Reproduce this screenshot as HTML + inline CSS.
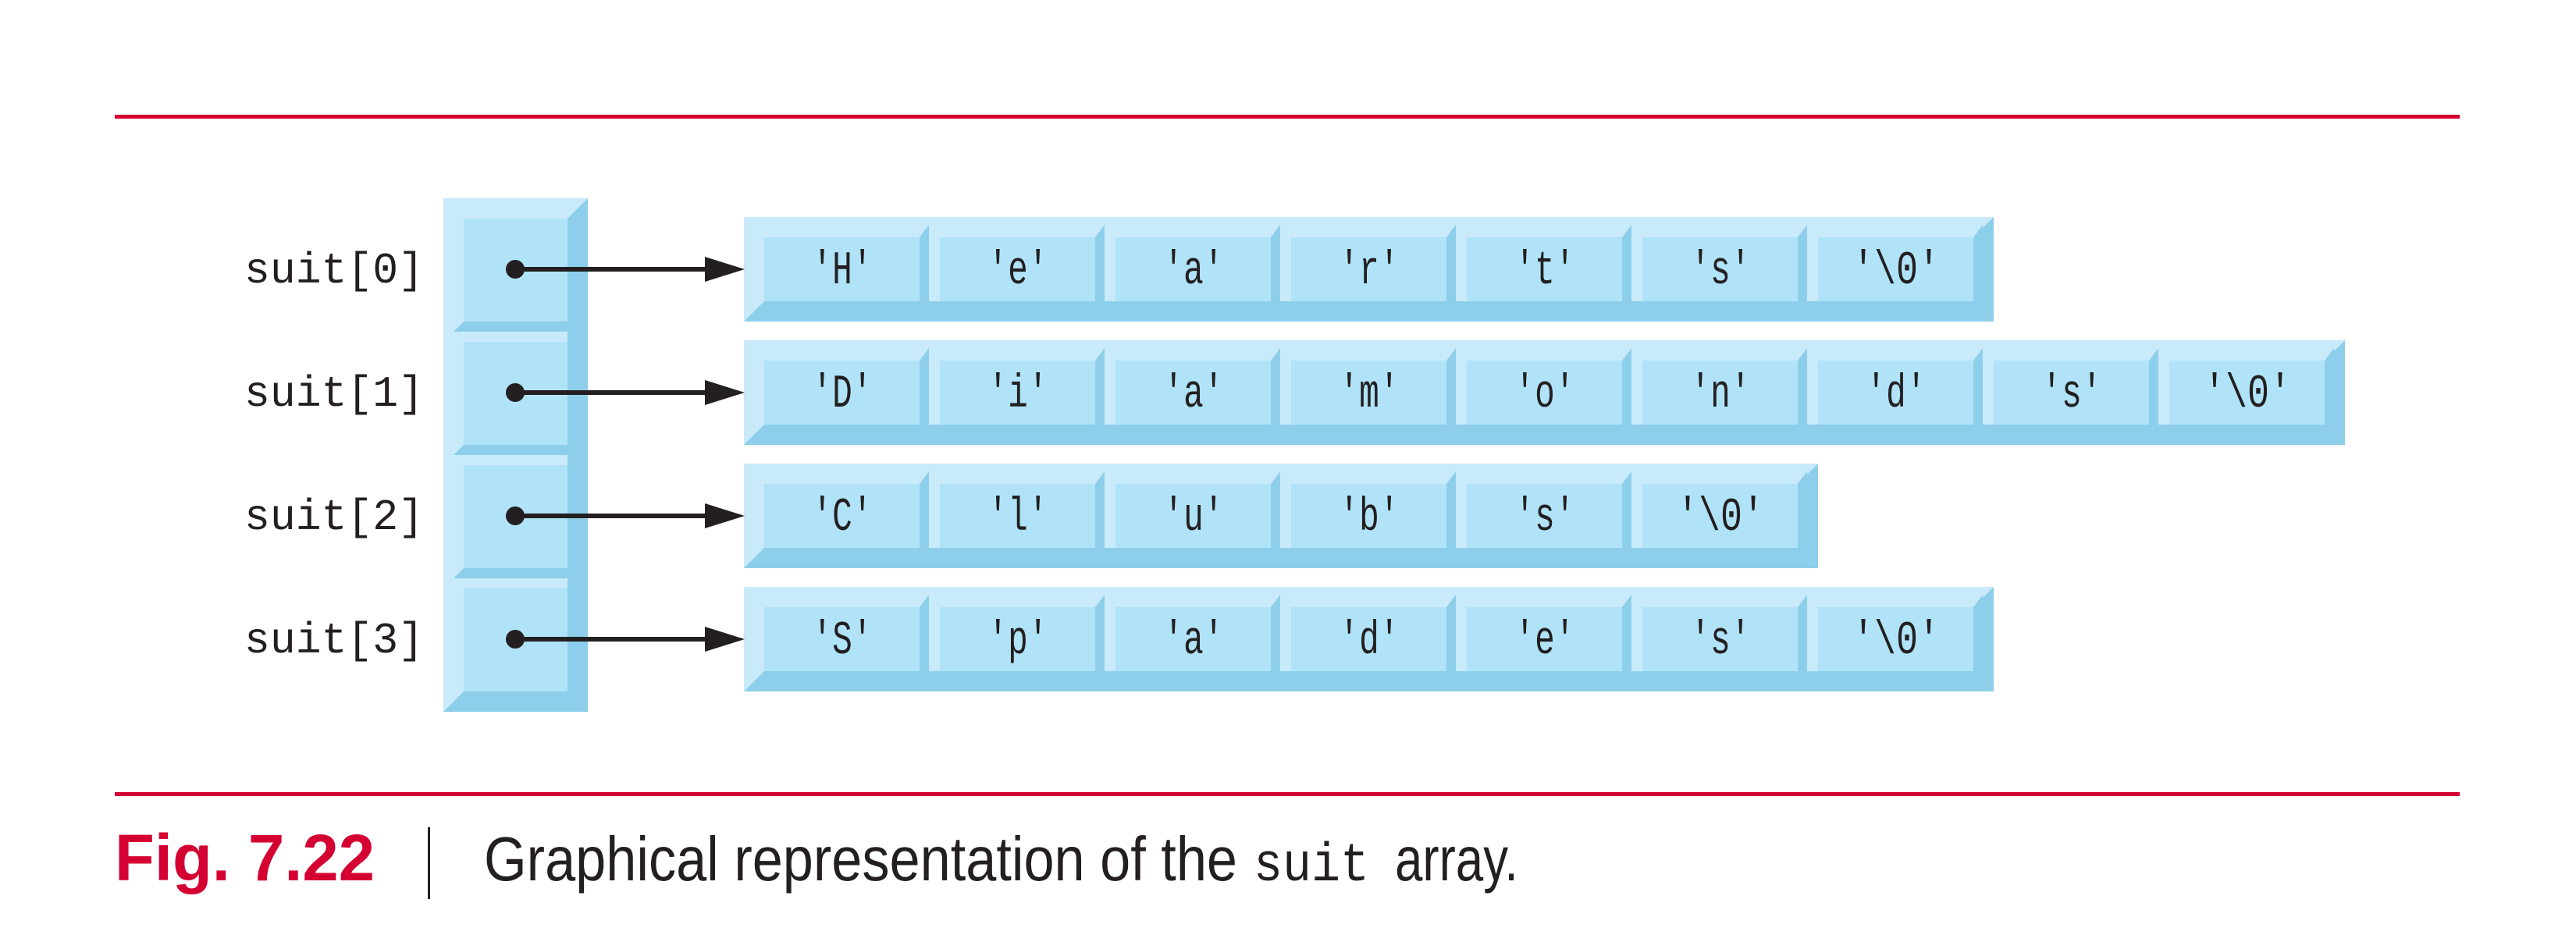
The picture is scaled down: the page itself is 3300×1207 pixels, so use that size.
<!DOCTYPE html>
<html><head><meta charset="utf-8"><style>
html,body{margin:0;padding:0;background:#fff;}
svg{display:block;}
.m{font-family:"Liberation Mono",monospace;fill:#231f20;}
.ct{font-size:60px;text-anchor:middle;}
.lb{font-size:56px;}
</style></head><body>
<svg width="3300" height="1207" viewBox="0 0 3300 1207" xmlns="http://www.w3.org/2000/svg">
<defs>
<g id="cell">
<polygon points="199,0 211,-16 211,108 199,108" fill="#8dcfea"/>
<rect x="0" y="0" width="199" height="82" fill="#b0e3f8"/>
</g>
</defs>
<rect x="147" y="147" width="3004" height="5" fill="#d50032"/>
<rect x="147" y="1015" width="3004" height="5" fill="#d50032"/>

<rect x="568" y="254" width="185" height="658" fill="#c9eafa"/>
<polygon points="753,254 753,912 727,886 727,280" fill="#8dcfea"/>
<polygon points="568,912 594,886 727,886 753,912" fill="#8dcfea"/>
<polygon points="581,425 594,412 727,412 727,425" fill="#8dcfea"/>
<polygon points="581,583 594,570 727,570 727,583" fill="#8dcfea"/>
<polygon points="581,741 594,728 727,728 727,741" fill="#8dcfea"/>
<rect x="594" y="280" width="133" height="132" fill="#b0e3f8"/>
<rect x="594" y="438" width="133" height="132" fill="#b0e3f8"/>
<rect x="594" y="596" width="133" height="132" fill="#b0e3f8"/>
<rect x="594" y="754" width="133" height="132" fill="#b0e3f8"/>

<g transform="translate(0,304)">
<rect x="953" y="-26" width="1601" height="134" fill="#c9eafa"/>
<polygon points="953,108 979,82 2528,82 2554,108" fill="#8dcfea"/>
<polygon points="2554,-26 2554,108 2528,82 2528,0" fill="#8dcfea"/>
<use href="#cell" x="979"/><use href="#cell" x="1204"/><use href="#cell" x="1429"/><use href="#cell" x="1654"/><use href="#cell" x="1879"/><use href="#cell" x="2104"/><use href="#cell" x="2329"/>
</g>
<g transform="translate(0,462)">
<rect x="953" y="-26" width="2051" height="134" fill="#c9eafa"/>
<polygon points="953,108 979,82 2978,82 3004,108" fill="#8dcfea"/>
<polygon points="3004,-26 3004,108 2978,82 2978,0" fill="#8dcfea"/>
<use href="#cell" x="979"/><use href="#cell" x="1204"/><use href="#cell" x="1429"/><use href="#cell" x="1654"/><use href="#cell" x="1879"/><use href="#cell" x="2104"/><use href="#cell" x="2329"/><use href="#cell" x="2554"/><use href="#cell" x="2779"/>
</g>
<g transform="translate(0,620)">
<rect x="953" y="-26" width="1376" height="134" fill="#c9eafa"/>
<polygon points="953,108 979,82 2303,82 2329,108" fill="#8dcfea"/>
<polygon points="2329,-26 2329,108 2303,82 2303,0" fill="#8dcfea"/>
<use href="#cell" x="979"/><use href="#cell" x="1204"/><use href="#cell" x="1429"/><use href="#cell" x="1654"/><use href="#cell" x="1879"/><use href="#cell" x="2104"/>
</g>
<g transform="translate(0,778)">
<rect x="953" y="-26" width="1601" height="134" fill="#c9eafa"/>
<polygon points="953,108 979,82 2528,82 2554,108" fill="#8dcfea"/>
<polygon points="2554,-26 2554,108 2528,82 2528,0" fill="#8dcfea"/>
<use href="#cell" x="979"/><use href="#cell" x="1204"/><use href="#cell" x="1429"/><use href="#cell" x="1654"/><use href="#cell" x="1879"/><use href="#cell" x="2104"/><use href="#cell" x="2329"/>
</g>

<g fill="#231f20" stroke="#231f20">
<circle cx="660" cy="345" r="12" stroke="none"/><line x1="660" y1="345" x2="910" y2="345" stroke-width="6"/><polygon points="903,329 954,345 903,361" stroke="none"/>
<circle cx="660" cy="503" r="12" stroke="none"/><line x1="660" y1="503" x2="910" y2="503" stroke-width="6"/><polygon points="903,487 954,503 903,519" stroke="none"/>
<circle cx="660" cy="661" r="12" stroke="none"/><line x1="660" y1="661" x2="910" y2="661" stroke-width="6"/><polygon points="903,645 954,661 903,677" stroke="none"/>
<circle cx="660" cy="819" r="12" stroke="none"/><line x1="660" y1="819" x2="910" y2="819" stroke-width="6"/><polygon points="903,803 954,819 903,835" stroke="none"/>
</g>

<text class="m lb" x="313" y="362" textLength="230" lengthAdjust="spacingAndGlyphs">suit[0]</text>
<text class="m lb" x="313" y="520" textLength="230" lengthAdjust="spacingAndGlyphs">suit[1]</text>
<text class="m lb" x="313" y="678" textLength="230" lengthAdjust="spacingAndGlyphs">suit[2]</text>
<text class="m lb" x="313" y="836" textLength="230" lengthAdjust="spacingAndGlyphs">suit[3]</text>

<g class="m ct">
<text x="1079" y="363" textLength="77" lengthAdjust="spacingAndGlyphs">'H'</text><text x="1304" y="363" textLength="77" lengthAdjust="spacingAndGlyphs">'e'</text><text x="1529" y="363" textLength="77" lengthAdjust="spacingAndGlyphs">'a'</text><text x="1754" y="363" textLength="77" lengthAdjust="spacingAndGlyphs">'r'</text><text x="1979" y="363" textLength="77" lengthAdjust="spacingAndGlyphs">'t'</text><text x="2204" y="363" textLength="77" lengthAdjust="spacingAndGlyphs">'s'</text><text x="2429" y="363" textLength="112" lengthAdjust="spacingAndGlyphs">'\0'</text>
<text x="1079" y="521" textLength="77" lengthAdjust="spacingAndGlyphs">'D'</text><text x="1304" y="521" textLength="77" lengthAdjust="spacingAndGlyphs">'i'</text><text x="1529" y="521" textLength="77" lengthAdjust="spacingAndGlyphs">'a'</text><text x="1754" y="521" textLength="77" lengthAdjust="spacingAndGlyphs">'m'</text><text x="1979" y="521" textLength="77" lengthAdjust="spacingAndGlyphs">'o'</text><text x="2204" y="521" textLength="77" lengthAdjust="spacingAndGlyphs">'n'</text><text x="2429" y="521" textLength="77" lengthAdjust="spacingAndGlyphs">'d'</text><text x="2654" y="521" textLength="77" lengthAdjust="spacingAndGlyphs">'s'</text><text x="2879" y="521" textLength="112" lengthAdjust="spacingAndGlyphs">'\0'</text>
<text x="1079" y="679" textLength="77" lengthAdjust="spacingAndGlyphs">'C'</text><text x="1304" y="679" textLength="77" lengthAdjust="spacingAndGlyphs">'l'</text><text x="1529" y="679" textLength="77" lengthAdjust="spacingAndGlyphs">'u'</text><text x="1754" y="679" textLength="77" lengthAdjust="spacingAndGlyphs">'b'</text><text x="1979" y="679" textLength="77" lengthAdjust="spacingAndGlyphs">'s'</text><text x="2204" y="679" textLength="112" lengthAdjust="spacingAndGlyphs">'\0'</text>
<text x="1079" y="837" textLength="77" lengthAdjust="spacingAndGlyphs">'S'</text><text x="1304" y="837" textLength="77" lengthAdjust="spacingAndGlyphs">'p'</text><text x="1529" y="837" textLength="77" lengthAdjust="spacingAndGlyphs">'a'</text><text x="1754" y="837" textLength="77" lengthAdjust="spacingAndGlyphs">'d'</text><text x="1979" y="837" textLength="77" lengthAdjust="spacingAndGlyphs">'e'</text><text x="2204" y="837" textLength="77" lengthAdjust="spacingAndGlyphs">'s'</text><text x="2429" y="837" textLength="112" lengthAdjust="spacingAndGlyphs">'\0'</text>
</g>

<text x="147" y="1128" font-family="Liberation Sans, sans-serif" font-weight="bold" font-size="84" fill="#d50032" textLength="333" lengthAdjust="spacingAndGlyphs">Fig. 7.22</text>
<rect x="548" y="1060" width="3" height="92" fill="#231f20"/>
<text x="620" y="1128" font-family="Liberation Sans, sans-serif" font-size="80" fill="#231f20" textLength="965" lengthAdjust="spacingAndGlyphs">Graphical representation of the</text>
<text x="1606" y="1128" font-family="Liberation Mono, monospace" font-size="70" fill="#231f20" textLength="148" lengthAdjust="spacingAndGlyphs">suit</text>
<text x="1787" y="1128" font-family="Liberation Sans, sans-serif" font-size="80" fill="#231f20" textLength="158" lengthAdjust="spacingAndGlyphs">array.</text>
</svg>
</body></html>
